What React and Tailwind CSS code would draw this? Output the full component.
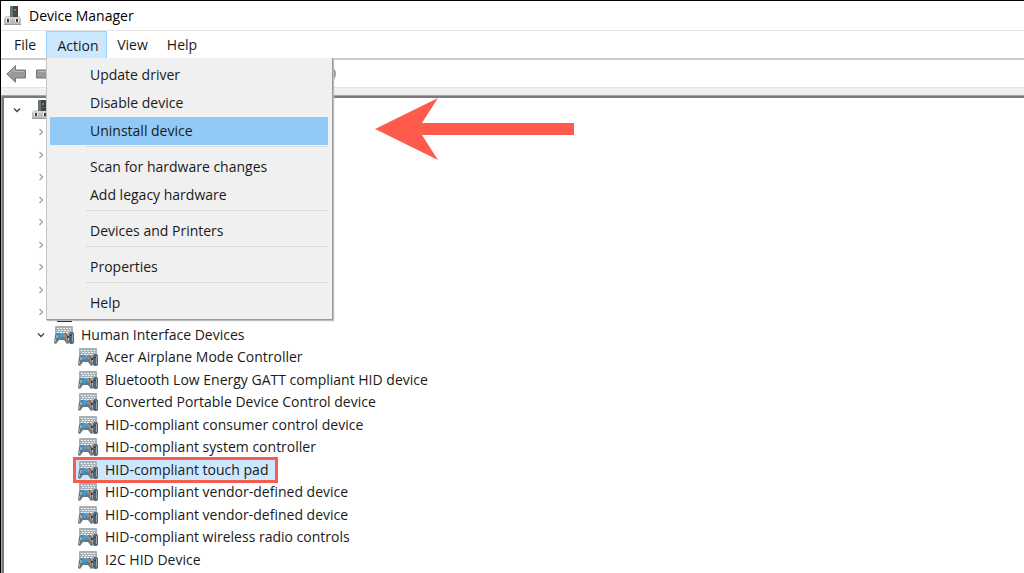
const classes = Array.from({ length: 9 });

const devices = [
	"Acer Airplane Mode Controller",
	"Bluetooth Low Energy GATT compliant HID device",
	"Converted Portable Device Control device",
	"HID-compliant consumer control device",
	"HID-compliant system controller",
	"HID-compliant touch pad",
	"HID-compliant vendor-defined device",
	"HID-compliant vendor-defined device",
	"HID-compliant wireless radio controls",
	"I2C HID Device",
];

const actionMenu = [
	["Update driver", "Disable device", "Uninstall device"],
	["Scan for hardware changes", "Add legacy hardware"],
	["Devices and Printers"],
	["Properties"],
	["Help"],
];

function ComputerIcon() {
	return (
		<svg width="17" height="20" viewBox="0 0 17 20" className="shrink-0" aria-hidden="true">
			<path d="M2 10h13l2 3v6H0v-6z" fill="#bdbdbd" />
			<path d="M2 10h13l2 3H0z" fill="#d2d2d2" />
			<path d="M6 1 7 0h7v11H6z" fill="#424647" />
			<path d="M6 1 7 0h2v11H6z" fill="#6d7172" />
			<rect x="10" y="3" width="2" height="2" fill="#2fae40" />
			<path d="M9 7.5h4" stroke="#565a5b" />
			<path d="M0 18.5h17" stroke="#9c9c9c" />
			<path d="M2 13h1v3H2zM5 13h1v3H5zM11 13h1v3h-1zM14 13h1v3h-1z" fill="#f5f5f5" />
			<rect x="3" y="13" width="2" height="3" fill="#3a3a3a" />
			<rect x="12" y="13" width="2" height="3" fill="#3a3a3a" />
		</svg>
	);
}

function HidIcon() {
	return (
		<svg width="21" height="18" viewBox="0 0 21 18" className="shrink-0" aria-hidden="true">
			<rect x="1" width="18" height="11" rx="1" fill="#a7afb6" />
			<path d="M3 2.500h14M4 4.500h13M3 6.500h14" stroke="#eef1f3" strokeDasharray="2 1" />
			<path d="M1 9 3 7h3l1 1h2l1-1h2l2 2 1 8-2 1-3-4H5l-3 4-2-1z" fill="#6a7680" />
			<path d="M2 9h2v3H2zM1 13h1v3H1z" fill="#a0abb4" />
			<path d="M12 10h1v5h-1z" fill="#8c98a2" />
			<path d="m6.500 7 2.500 2.500L6.500 12 4 9.500z" fill="#29a3f4" stroke="#29a3f4" />
			<path d="M10 7.500 12 9.500 10 12 9 9.500z" fill="#d2853f" />
			<path d="M13 10h3v2h-3z" fill="#38424b" />
			<rect x="15" y="6" width="5" height="12" rx="2" fill="#56626c" />
			<path d="M18.500 8v8" stroke="#96a2ac" />
			<path d="M16 9.500h2" stroke="#2e3840" />
		</svg>
	);
}

function FirmwareIcon() {
	return (
		<svg width="15" height="20" viewBox="0 0 15 20" className="shrink-0" aria-hidden="true">
			<rect width="15" height="20" fill="#111" />
		</svg>
	);
}

function Chevron({ open }) {
	return (
		<svg width="8" height="8" viewBox="0 0 8 8" className="shrink-0" aria-hidden="true">
			{open ? (
				<path d="m1 2.5 3 3 3-3" fill="none" stroke="#404040" strokeWidth="1.3" />
			) : (
				<path d="m2.5 1 3 3-3 3" fill="none" stroke="#a0a0a0" strokeWidth="1.3" />
			)}
		</svg>
	);
}

function ToolbarArrow({ flip }) {
	return (
		<svg width="21" height="18" viewBox="0 0 21 18" className={flip ? "-scale-x-100" : ""} aria-hidden="true">
			<path d="M.8 9 9.5.8V5h10v8h-10v4.2z" fill="#999" stroke="#777" />
			<path d="M3 9 8.5 3.5V6.5H18" fill="none" stroke="#b8b8b8" />
		</svg>
	);
}

function ActionMenu() {
	return (
		<div
			role="menu"
			className="absolute left-0 top-full z-20 w-[287px] border border-t-0 border-[#c4c4c4] border-r-[#9a9a9a] border-b-[#9a9a9a] bg-[#f0f0f0] pt-[3px] pr-1 pb-[2px] pl-[3px] shadow-[1px_1px_1px_#bbb]"
		>
			{actionMenu.map((group, i) => (
				<div key={i} role="group">
					{i > 0 && <div className="mt-px mb-[6px] ml-9 h-px bg-[#dadada]" />}
					{group.map((label) => (
						<button
							key={label}
							role="menuitem"
							className={`flex h-7 w-full items-center pl-10 text-left ${
								label === "Uninstall device" ? "bg-[#91c9f7]" : ""
							}`}
						>
							{label}
						</button>
					))}
				</div>
			))}
		</div>
	);
}

export default function App() {
	return (
		<div className="relative flex min-h-screen flex-col border-t border-l border-black bg-white font-['Open_Sans',sans-serif] text-sm whitespace-nowrap text-[#1a1a1a]">
			<header className="flex h-[29px] items-center gap-2 pl-[3px] text-black">
				<ComputerIcon />
				<h1>Device Manager</h1>
			</header>

			<nav className="flex h-7 border-t border-[#e5e5e5]">
				<button className="w-[45px] pl-[3px]">File</button>
				<div className="relative w-[61px]">
					<button className="h-full w-full border border-b-0 border-[#99d1ff] bg-[#cce8ff] pt-px pl-[3px]">
						Action
					</button>
					<ActionMenu />
				</div>
				<button className="w-[51px]">View</button>
				<button className="w-12">Help</button>
			</nav>

			<div className="flex h-[30px] items-center gap-2 border-t-2 border-b border-t-[#cccdd1] border-b-[#e3e3e3] pl-[5px]">
				<button aria-label="Back"><ToolbarArrow /></button>
				<button aria-label="Forward"><ToolbarArrow flip /></button>
				<span className="ml-[254px] size-[18px] rounded-full border-2 border-[#999]" />
			</div>
			<div className="h-[7px] bg-[#f0f0f0]" />

			<main className="flex flex-1 flex-col border-t border-l border-[#a5a5a5]">
				<ul className="flex-1 border-t-2 border-l-2 border-[#7a7a7a]">
					<li className="flex h-[23px] items-center gap-[11px] pl-[9px]">
						<Chevron open />
						<ComputerIcon />
					</li>
					{classes.map((_, i) => (
						<li key={i} className="flex items-center gap-3 pl-[33px] odd:h-[23px] even:h-[22px]">
							<Chevron />
							{i === classes.length - 1 && <FirmwareIcon />}
						</li>
					))}
					<li className="flex h-[23px] items-center gap-[9px] pl-[33px]">
						<Chevron open />
						<span className="flex items-center gap-[6px]">
							<HidIcon />
							Human Interface Devices
						</span>
					</li>
					{devices.map((name, i) => (
						<li key={i} className="flex items-center pl-[74px] odd:h-[23px] even:h-[22px]">
							{name === "HID-compliant touch pad" ? (
								<span className="-ml-[5px] flex h-[26px] items-center gap-[6px] border-3 border-[#f75d4f] bg-[#cce8ff] pr-[7px] pl-[2px]">
									<HidIcon />
									{name}
								</span>
							) : (
								<span className="flex items-center gap-[6px]">
									<HidIcon />
									{name}
								</span>
							)}
						</li>
					))}
				</ul>
			</main>

			<svg width="200" height="64" viewBox="0 0 200 64" className="absolute top-24 left-[374px]" aria-hidden="true">
				<path d="M0 32 63 1 47 26h152v12H47l16 25z" fill="#ff5b4d" />
			</svg>
		</div>
	);
}
